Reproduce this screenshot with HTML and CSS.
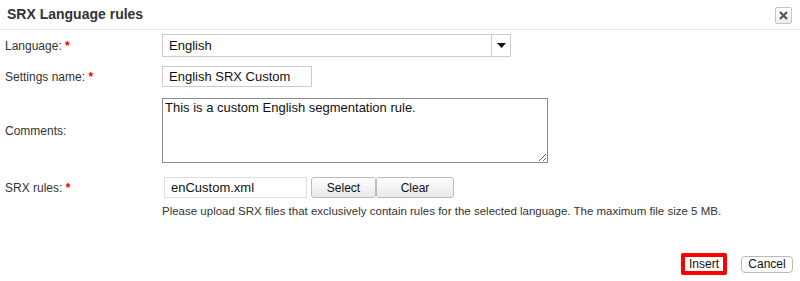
FILE: index.html
```html
<!DOCTYPE html>
<html>
<head>
	<title>SRX Language rules</title>
	<link rel="stylesheet" href="styles.css">
</head>
<body>
	<div class="dialog">
		<div class="dialog-header">
			<h2 class="dialog-title">SRX Language rules</h2>
			<button type="button" class="close-btn" title="Close">
				<svg width="9" height="9" viewBox="0 0 9 9"><path d="M1 1L8 8M8 1L1 8" stroke="#555" stroke-width="2.2"/></svg>
			</button>
		</div>
		<form class="dialog-body" action="#" method="post">
			<div class="row row-lang">
				<label class="field-label">Language: <span class="req">*</span></label>
				<div class="fake-select">
					<span class="fake-select-text">English</span>
					<span class="fake-select-arrow"><svg width="9" height="5" viewBox="0 0 9 5"><path d="M0 0H9L4.5 5Z" fill="#111"/></svg></span>
				</div>
			</div>
			<div class="row row-name">
				<label class="field-label">Settings name: <span class="req">*</span></label>
				<input type="text" class="form-field name-field" value="English SRX Custom">
			</div>
			<div class="row row-comments">
				<label class="field-label">Comments:</label>
				<textarea class="comments-field">This is a custom English segmentation rule.</textarea>
			</div>
			<div class="row row-srx">
				<label class="field-label">SRX rules: <span class="req">*</span></label>
				<div class="upload">
					<input type="text" class="form-field file-field" value="enCustom.xml">
					<button type="button" class="tombol btn-select">Select</button>
					<button type="button" class="tombol btn-clear">Clear</button>
				</div>
			</div>
			<p class="help">Please upload SRX files that exclusively contain rules for the selected language. The maximum file size 5 MB.</p>
			<div class="dialog-footer">
				<span class="highlight"><button type="button" class="tombol btn-insert">Insert</button></span>
				<button type="button" class="tombol btn-cancel">Cancel</button>
			</div>
		</form>
	</div>
</body>
</html>
```

FILE: styles.css
```css
html, body{
	margin: 0;
	padding: 0;
	background: #fff;
}
body{
	font-family: "Liberation Sans", Arial, sans-serif;
	font-size: 13px;
	color: #333;
}
.dialog{
	width: 800px;
	height: 281px;
}
.dialog-header{
	display: flex;
	align-items: center;
	justify-content: space-between;
	height: 29px;
	border-bottom: 1px solid #e6e6e6;
	padding: 0 8px 0 7px;
}
.dialog-title{
	margin: 0;
	font-size: 14px;
	font-weight: bold;
	color: #333;
	margin-top: -2px;
}
.close-btn{
	width: 17px;
	height: 17px;
	padding: 0;
	margin-top: 1px;
	border: 1px solid #c4c4c4;
	border-radius: 2px;
	background: linear-gradient(#fff, #ececec);
	display: flex;
	align-items: center;
	justify-content: center;
}
.dialog-body{
	padding: 4px 0 0 5px;
	margin: 0;
}
.row{
	display: flex;
	align-items: center;
}
.field-label{
	width: 157px;
	font-size: 12px;
	color: #333;
}
.req{
	color: #e00;
	font-weight: bold;
}
.fake-select{
	display: flex;
	width: 347px;
	height: 21px;
	border: 1px solid #ccc;
	background: #fff;
}
.fake-select-text{
	flex: 1;
	padding-left: 6px;
	line-height: 21px;
	color: #111;
}
.fake-select-arrow{
	width: 18px;
	border-left: 1px solid #ccc;
	display: flex;
	align-items: center;
	justify-content: center;
}
.row-name{
	margin-top: 9px;
}
.form-field{
	box-sizing: border-box;
	border: 1px solid #ccc;
	background: #fff;
	font-family: "Liberation Sans", Arial, sans-serif;
	font-size: 13px;
	color: #111;
	padding: 0 6px;
	height: 21px;
	margin: 0;
	outline: none;
}
.name-field{
	width: 150px;
}
.row-comments{
	margin-top: 11px;
}
.comments-field{
	box-sizing: border-box;
	width: 386px;
	height: 65px;
	border: 1px solid #8a8a8a;
	font-family: "Liberation Sans", Arial, sans-serif;
	font-size: 13px;
	color: #111;
	padding: 1px 2px;
	margin: 0;
	resize: both;
}
.row-srx{
	margin-top: 14px;
}
.upload{
	display: flex;
	align-items: center;
	padding-left: 2px;
}
.file-field{
	width: 143px;
	border-color: #ddd;
	margin-right: 4px;
}
.tombol{
	box-sizing: border-box;
	height: 21px;
	font-family: "Liberation Sans", Arial, sans-serif;
	font-size: 12px;
	color: #111;
	border: 1px solid #bbb;
	border-radius: 3px;
	background: linear-gradient(#fff, #e8e8e8);
	padding: 0;
	margin: 0;
}
.btn-select{
	width: 65px;
}
.btn-clear{
	width: 78px;
}
.help{
	margin: 7px 0 0 157px;
	font-size: 11.5px;
	color: #333;
}
.dialog-footer{
	display: flex;
	justify-content: flex-end;
	align-items: center;
	margin-top: 36px;
	padding-right: 7px;
}
.highlight{
	display: flex;
	border: 4px solid #f00;
	border-radius: 2px;
	margin-right: 14px;
}
.btn-insert{
	width: 38px;
	height: 14px;
	border: none;
	border-radius: 0;
	background: #fff;
	font-size: 12px;
	line-height: 14px;
}
.btn-cancel{
	width: 52px;
	height: 17px;
	border-radius: 4px;
	background: #fff;
}
```
